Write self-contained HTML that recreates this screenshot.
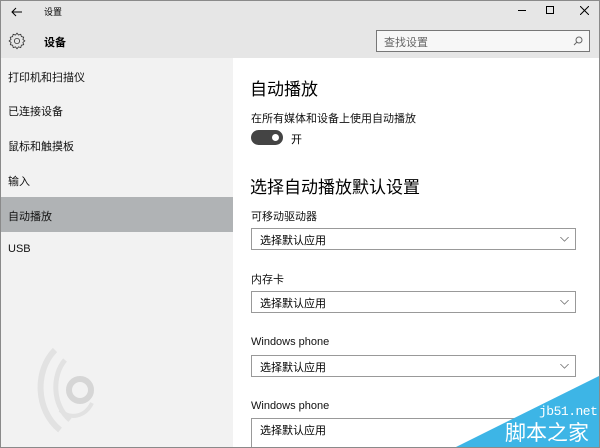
<!DOCTYPE html>
<html><head><meta charset="utf-8"><style>
*{margin:0;padding:0;box-sizing:border-box}
body{width:600px;height:448px;overflow:hidden;font-family:"Liberation Sans","Noto Sans CJK SC",sans-serif;background:#fff;position:relative;color:#000}
.frame{position:absolute;inset:0;border:1px solid #8a8a8a;pointer-events:none;z-index:9}
.top{position:absolute;left:0;top:0;width:600px;height:58px;background:#e6e6e6}
.side{position:absolute;left:0;top:58px;width:233px;height:390px;background:#f2f2f2}
.abs{position:absolute;white-space:nowrap}
.item{position:absolute;left:8px;font-size:11px;color:#111}
.sel{position:absolute;left:0;top:197px;width:233px;height:35px;background:#b0b3b5}
.dd{position:absolute;left:251px;width:325px;height:22px;border:1.5px solid #999;background:#fff;font-size:11px;padding:3px 0 0 8px}
.dd svg{position:absolute;right:6px;top:8px}
.lbl{position:absolute;left:251px;font-size:11px;color:#111}
</style></head><body>
<div class="top"></div>
<div class="side"></div>
<div class="sel"></div>
<svg class="abs" style="left:11px;top:7px" width="12" height="10" viewBox="0 0 12 10"><path d="M11 5H1M5 1L1 5l4 4" fill="none" stroke="#000" stroke-width="1"/></svg>
<div class="abs" style="left:44px;top:5px;font-size:9px">设置</div>
<div class="abs" style="left:518px;top:10px;width:8px;height:1px;background:#000"></div>
<div class="abs" style="left:546px;top:6px;width:8px;height:8px;border:1px solid #000"></div>
<svg class="abs" style="left:580px;top:6px" width="9" height="9" viewBox="0 0 9 9"><path d="M0 0L9 9M9 0L0 9" stroke="#000" stroke-width="1"/></svg>
<svg class="abs" style="left:8px;top:32px" width="18" height="18" viewBox="0 0 24 24"><path d="M12 1.5l2 2.5 3-1 .8 3.1 3.1.8-1 3 2.5 2-2.5 2 1 3-3.1.8-.8 3.1-3-1-2 2.5-2-2.5-3 1-.8-3.1-3.1-.8 1-3L1.5 12 4 10 3 7l3.1-.8L6.9 3.1l3 1z" fill="none" stroke="#333" stroke-width="1.1"/><circle cx="12" cy="12" r="3.5" fill="none" stroke="#333" stroke-width="1.1"/></svg>
<div class="abs" style="left:44px;top:34px;font-size:11px;font-weight:bold">设备</div>
<div class="abs" style="left:376px;top:30px;width:214px;height:22px;border:1.5px solid #777;background:#f7f7f7;font-size:11px;color:#666;padding:3px 0 0 7px">查找设置
<svg style="position:absolute;right:6px;top:5px" width="10" height="10" viewBox="0 0 10 10"><circle cx="6" cy="4" r="3" fill="none" stroke="#666"/><path d="M4 6L1 9" stroke="#666"/></svg></div>
<div class="item" style="top:69px">打印机和扫描仪</div>
<div class="item" style="top:103px">已连接设备</div>
<div class="item" style="top:138px">鼠标和触摸板</div>
<div class="item" style="top:173px">输入</div>
<div class="item" style="top:208px">自动播放</div>
<div class="item" style="top:243px">USB</div>
<svg class="abs" style="left:30px;top:345px" width="90" height="90" viewBox="0 0 90 90"><g fill="none" stroke="#e2e2e2"><path d="M25 5C5 25 5 65 30 85" stroke-width="6"/><path d="M35 15C22 30 22 60 40 75" stroke-width="5"/><circle cx="50" cy="45" r="11" stroke-width="6" stroke="#d6d6d6"/><path d="M62 58C55 72 40 75 30 65" stroke-width="4"/></g></svg>
<div class="abs" style="left:250px;top:75px;font-size:17px">自动播放</div>
<div class="lbl" style="top:110px">在所有媒体和设备上使用自动播放</div>
<div class="abs" style="left:251px;top:130px;width:32px;height:15px;border-radius:8px;background:#444"><div style="position:absolute;right:4px;top:4px;width:7px;height:7px;border-radius:50%;background:#fff"></div></div>
<div class="abs" style="left:291px;top:131px;font-size:11px">开</div>
<div class="abs" style="left:250px;top:173px;font-size:17px">选择自动播放默认设置</div>
<div class="lbl" style="top:208px">可移动驱动器</div>
<div class="dd" style="top:228px">选择默认应用<svg width="9" height="5" viewBox="0 0 10 6"><path d="M0 0l5 5 5-5" fill="none" stroke="#777"/></svg></div>
<div class="lbl" style="top:271px">内存卡</div>
<div class="dd" style="top:291px">选择默认应用<svg width="9" height="5" viewBox="0 0 10 6"><path d="M0 0l5 5 5-5" fill="none" stroke="#777"/></svg></div>
<div class="lbl" style="top:336px">Windows phone</div>
<div class="dd" style="top:355px">选择默认应用<svg width="9" height="5" viewBox="0 0 10 6"><path d="M0 0l5 5 5-5" fill="none" stroke="#777"/></svg></div>
<div class="lbl" style="top:400px">Windows phone</div>
<div class="dd" style="top:418px;height:30px">选择默认应用</div>
<svg class="abs" style="left:0;top:0" width="600" height="448"><polygon points="456,447 599,376 599,447" fill="#3db5e6"/></svg>
<div class="abs" style="left:539px;top:404px;font-size:13px;color:#fff;font-family:'Liberation Mono',monospace;letter-spacing:-0.5px">jb51.net</div>
<div class="abs" style="left:505px;top:423px;font-size:21px;color:#fff;line-height:22px">脚本之家</div>
<div class="frame"></div>
</body></html>
